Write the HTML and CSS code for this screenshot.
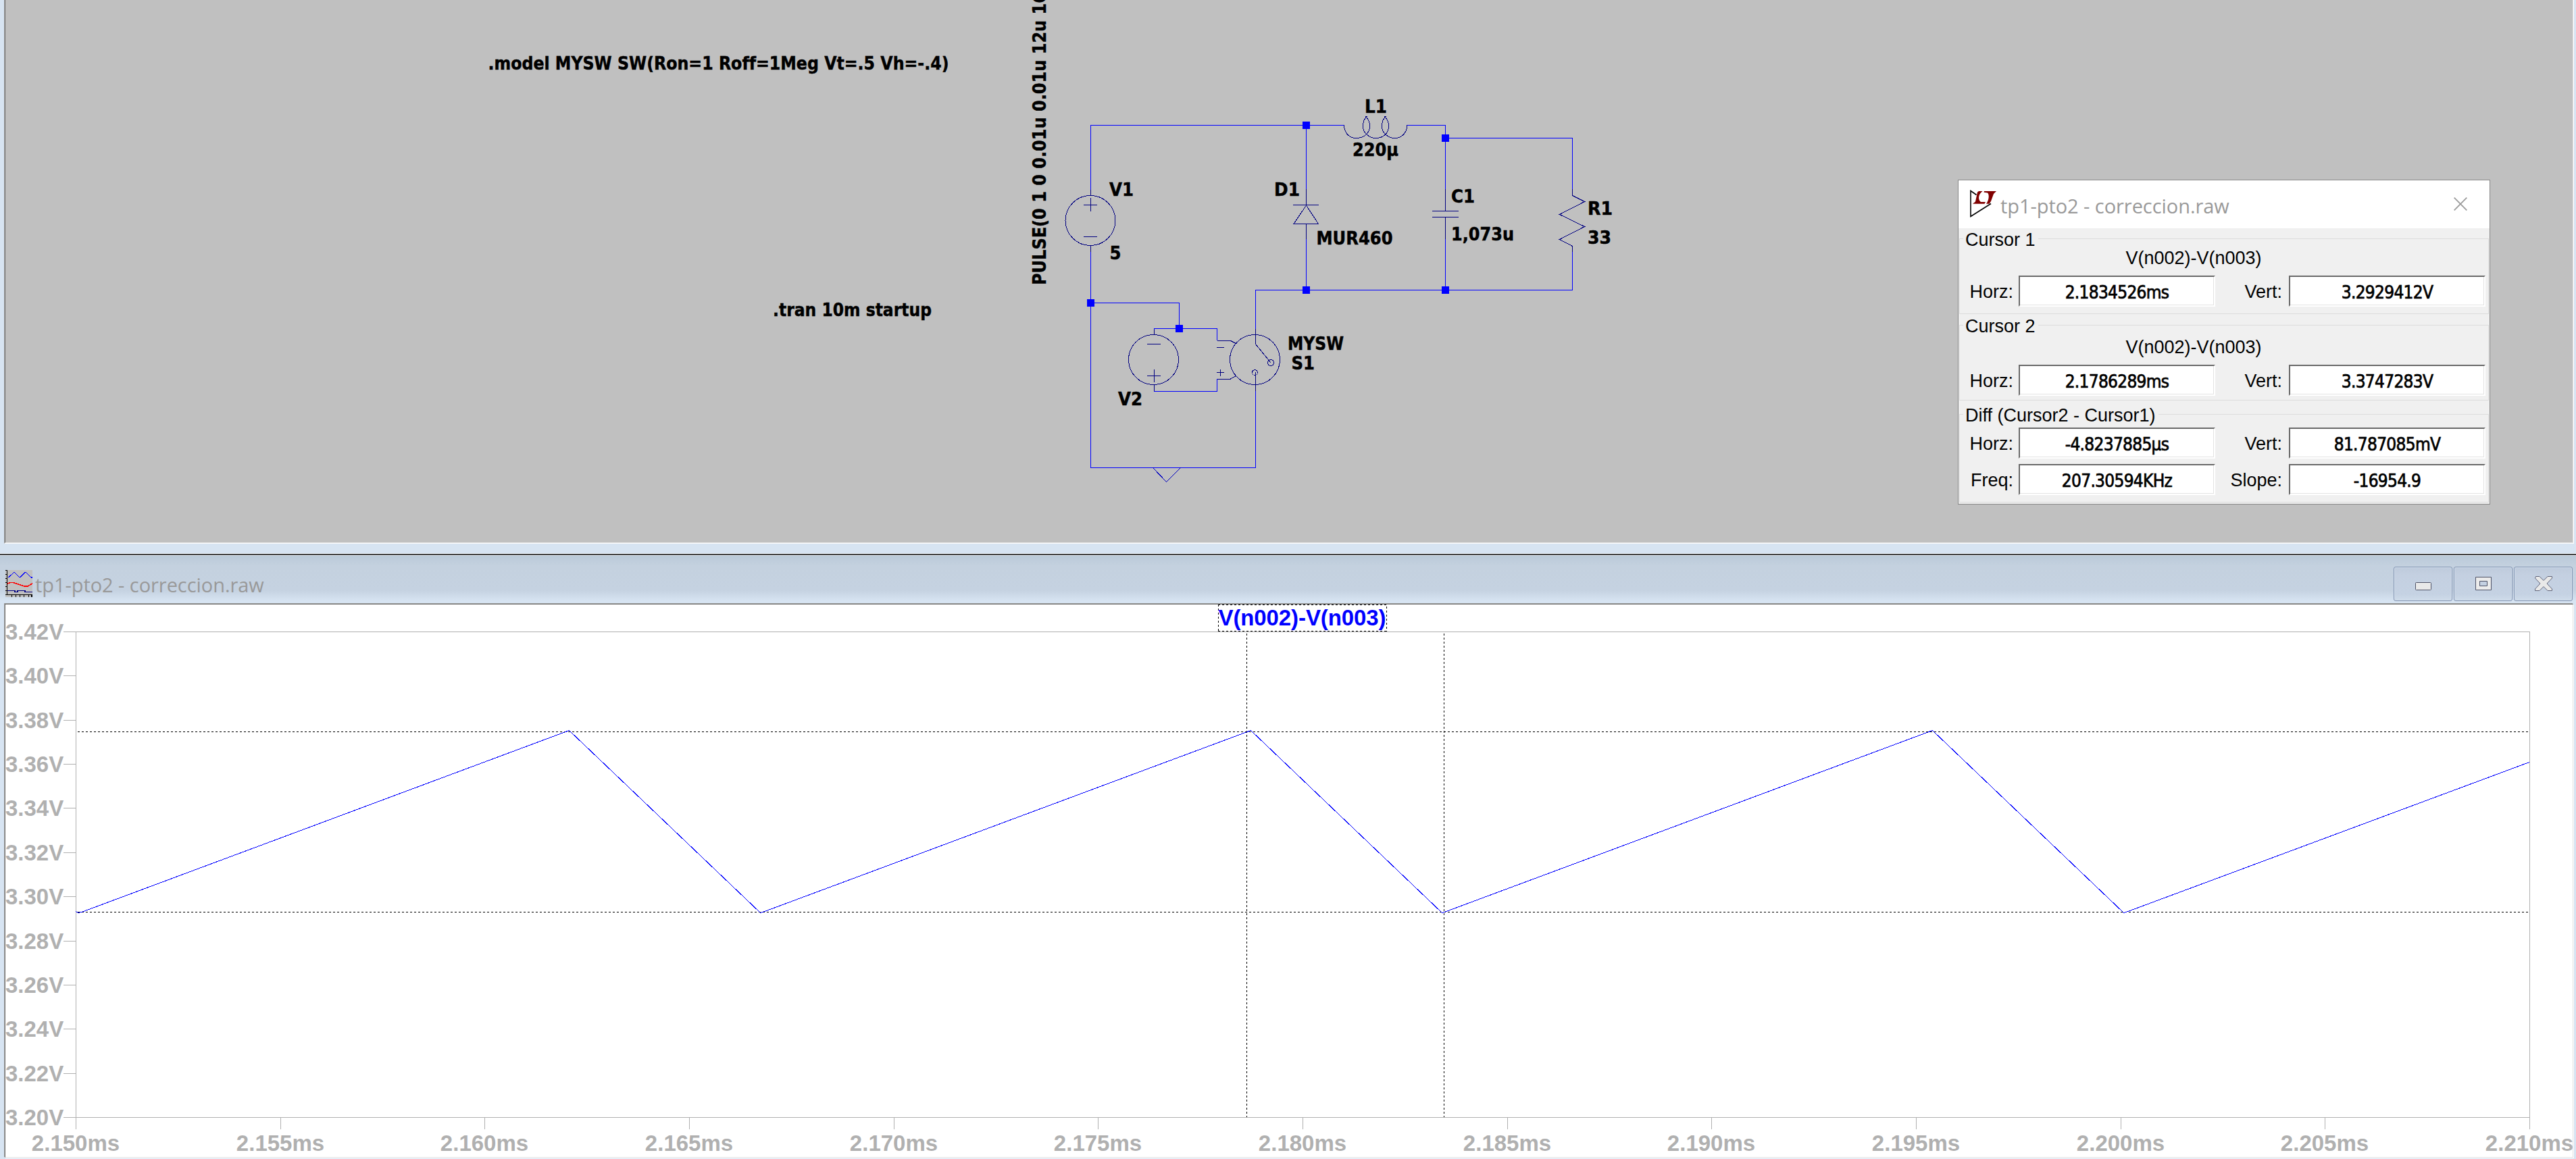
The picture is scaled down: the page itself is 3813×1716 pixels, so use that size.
FILE: index.html
```html
<!DOCTYPE html>
<html lang="es">
<head>
<meta charset="utf-8">
<title>tp1-pto2 - correccion.raw</title>
<link rel="stylesheet" href="styles.css">
</head>
<body>
<div class="workspace">
  <section class="schematic-window">
    <svg class="schematic" width="3800" height="803" viewBox="8 0 3800 803">
      <g class="wire">
        <path d="M1614.5 281V185.5H1989.5M2083 185.5H2139.5V280M1933.5 185.5V280M2139.5 204.5H2327.5V280M2327.5 373V429.5H1858.5V487M1933.5 354V429.5M2139.5 354V429.5M1614.5 373V692.5H1858.5V579M1614.5 448.5H1745.5V486.5M1708.5 495V486.5H1801.5V504M1708.5 570V579.5H1801.5V561"/>
        <path class="ground" d="M1706.5 692.5L1726.5 713.5L1747.5 692.5"/>
      </g>
      <g class="part">
        <circle cx="1614" cy="326.5" r="37"/>
        <path d="M1614.5 281V289M1614.5 363V373M1604 303.5H1624M1614.5 293V313M1604 350.5H1624"/>
        <path d="M1933.5 280V303.5M1914 303.5H1952M1933.5 304L1915 331.5H1951.5L1933.5 304M1933.5 331V354M1914 331.5H1952"/>
        <path d="M1989.5 185.5C1990 197 1997 204.5 2007.5 204.5C2016 204.5 2027.5 200 2027.5 186C2027.5 180 2024 175 2021.5 172M2023.5 172C2020 175 2017.5 180 2017.5 187C2017.5 196 2026 204.5 2036.5 204.5C2046 204.5 2055.5 199 2055.5 186C2055.5 180 2052 175 2049.5 172M2051.5 172C2048 175 2045.5 180 2045.5 187C2045.5 196 2054 204.5 2064.5 204.5C2075 204.5 2082 197 2083 185.5"/>
        <path d="M2139.5 280V312M2120 312.5H2159M2120 321.5H2159M2139.5 321V354"/>
        <path d="M2327.5 280V289.5L2345.5 298.5L2308.5 317.5L2345.5 335.5L2308.5 354.5L2327.5 364.5V373"/>
        <circle cx="1707.5" cy="532.5" r="37"/>
        <path d="M1708.5 488V495M1708.5 570V579M1698 509.5H1718M1698 556.5H1718M1708.5 547V566"/>
        <circle cx="1857.5" cy="532.5" r="37"/>
        <path d="M1801.5 504.5H1821.5L1830.5 509M1801.5 561.5H1820.5L1829.5 556.5M1801 514.5H1812M1801 551.5H1812M1806.5 547V557"/>
        <path d="M1858.5 487V509.5L1881 537M1858.5 551V579"/>
        <circle cx="1881" cy="537" r="4.5"/>
        <circle cx="1857.5" cy="551.5" r="4"/>
      </g>
      <g class="node">
        <rect x="1928" y="180" width="11" height="11"/>
        <rect x="2134" y="199" width="11" height="11"/>
        <rect x="1928" y="424" width="11" height="11"/>
        <rect x="2134" y="424" width="11" height="11"/>
        <rect x="1609" y="443" width="11" height="11"/>
        <rect x="1740" y="481" width="11" height="11"/>
      </g>
      <g class="label">
        <text x="722.5" y="103" textLength="682" lengthAdjust="spacingAndGlyphs">.model MYSW SW(Ron=1 Roff=1Meg Vt=.5 Vh=-.4)</text>
        <text x="1144" y="468" textLength="235" lengthAdjust="spacingAndGlyphs">.tran 10m startup</text>
        <text transform="translate(1548 422) rotate(-90)" textLength="434" lengthAdjust="spacingAndGlyphs">PULSE(0 1 0 0.01u 0.01u 12u 16</text>
        <text x="1642" y="290" textLength="36" lengthAdjust="spacingAndGlyphs">V1</text>
        <text x="1642.5" y="384" textLength="17" lengthAdjust="spacingAndGlyphs">5</text>
        <text x="1886" y="290" textLength="38" lengthAdjust="spacingAndGlyphs">D1</text>
        <text x="1948.5" y="362" textLength="113" lengthAdjust="spacingAndGlyphs">MUR460</text>
        <text x="2020" y="167" textLength="33" lengthAdjust="spacingAndGlyphs">L1</text>
        <text x="2002" y="231" textLength="68" lengthAdjust="spacingAndGlyphs">220µ</text>
        <text x="2148" y="300" textLength="35" lengthAdjust="spacingAndGlyphs">C1</text>
        <text x="2148" y="356" textLength="93" lengthAdjust="spacingAndGlyphs">1,073u</text>
        <text x="2350" y="318" textLength="37" lengthAdjust="spacingAndGlyphs">R1</text>
        <text x="2350" y="361" textLength="35" lengthAdjust="spacingAndGlyphs">33</text>
        <text x="1655" y="600" textLength="36" lengthAdjust="spacingAndGlyphs">V2</text>
        <text x="1906" y="518" textLength="83" lengthAdjust="spacingAndGlyphs">MYSW</text>
        <text x="1911.5" y="547" textLength="34.5" lengthAdjust="spacingAndGlyphs">S1</text>
      </g>
    </svg>
  </section>

  <section class="wave-window">
    <header class="wave-title">
      <svg class="wave-icon" width="40" height="40" viewBox="0 0 40 40" shape-rendering="crispEdges">
        <rect width="40" height="40" fill="#c0c0c0"/>
        <path d="M2.5 0V36M0 .5H2M0 6.5H2M0 12.5H2M0 18.5H2M0 24.5H2M0 30.5H2M0 36.5H40M9.5 36V40M15.5 36V40M21.5 36V40M27.5 36V40M34.5 36V40M39 36V40" stroke="#000" stroke-width="1.5" fill="none"/>
        <path d="M4 11L9 7L13 3L21 11L30 3L38 11H40" stroke="#00f" stroke-width="1.3" fill="none"/>
        <path d="M3 20L7 18.5H12L20 21.5L28 24H33L40 20" stroke="#f00" stroke-width="1.6" fill="none"/>
        <path d="M3 30.5H14V32.5H18V30.5H29V32.5H40" stroke="#000080" stroke-width="1.3" fill="none"/>
      </svg>
      <span class="caption">tp1-pto2 - correccion.raw</span>
      <div class="buttons">
        <span class="button"><svg width="24" height="24"><rect x=".5" y="10.5" width="23" height="11" rx="1" fill="#e9e9e9" stroke="#4f5266"/></svg></span>
        <span class="button"><svg width="24" height="24"><path d="M.5 2.5h23v19H.5zM6.500 8.500v7h11v-7z" fill="#ececec" fill-rule="evenodd" stroke="#4f5266"/></svg></span>
        <span class="button"><svg width="26" height="24"><path d="M1.500 1.500H7L13 7.500L19 1.500H25.500V4L18 12L25.500 20V22.500H19L13 16.500L7 22.500H.5V20L8 12L.5 4z" fill="#e9e9e9" stroke="#60647a"/></svg></span>
      </div>
    </header>
    <svg class="plot" width="3800" height="818" viewBox="8 895 3800 818">
      <path class="axis" d="M94 935.500H3744.500V1672M112.500 935V1672M94 1654.500H3744M94 1000.500h18M94 1066.500h18M94 1131.500h18M94 1196.500h18M94 1262.500h18M94 1327.500h18M94 1393.500h18M94 1458.500h18M94 1523.500h18M94 1589.500h18M415.500 1654v18M717.500 1654v18M1020.500 1654v18M1323.500 1654v18M1625.500 1654v18M1928.500 1654v18M2231.500 1654v18M2533.500 1654v18M2836.500 1654v18M3139.500 1654v18M3441.500 1654v18"/>
      <path class="cursor" d="M115 1083.500H3743M115 1350.500H3743M1845.500 938V1654M2137.500 938V1654"/>
      <path class="cursor" d="M1803.500 895V934.500M1803 895.500H2052.500V934.500M1803 934.500H2052"/>
      <path class="trace" d="M112 1349.500L116 1351.500L122 1350L842.500 1081.500L1125.500 1351.500L1129 1350.500L1851.500 1081.500L2134.500 1351.500L2138 1350.500L2860.500 1081.500L3143.500 1351.500L3147 1350.500L3744 1128.500"/>
      <text class="trace-name" x="1803.500" y="926" textLength="248">V(n002)-V(n003)</text>
      <g class="tick">
        <text x="8" y="947">3.42V</text><text x="8" y="1012">3.40V</text>
        <text x="8" y="1078">3.38V</text><text x="8" y="1143">3.36V</text>
        <text x="8" y="1208">3.34V</text><text x="8" y="1274">3.32V</text>
        <text x="8" y="1339">3.30V</text><text x="8" y="1405">3.28V</text>
        <text x="8" y="1470">3.26V</text><text x="8" y="1535">3.24V</text>
        <text x="8" y="1601">3.22V</text><text x="8" y="1666">3.20V</text>
      </g>
      <g class="tick time">
        <text x="112" y="1704">2.150ms</text><text x="415" y="1704">2.155ms</text>
        <text x="717" y="1704">2.160ms</text><text x="1020" y="1704">2.165ms</text>
        <text x="1323" y="1704">2.170ms</text><text x="1625" y="1704">2.175ms</text>
        <text x="1928" y="1704">2.180ms</text><text x="2231" y="1704">2.185ms</text>
        <text x="2533" y="1704">2.190ms</text><text x="2836" y="1704">2.195ms</text>
        <text x="3139" y="1704">2.200ms</text><text x="3441" y="1704">2.205ms</text>
        <text x="3744" y="1704">2.210ms</text>
      </g>
    </svg>
  </section>
</div>

<aside class="dialog">
  <header class="dialog-title">
    <svg class="lt-icon" width="40" height="42" viewBox="0 0 40 42">
      <path d="M9.500 7.500L1 1.500V39.500L31 20.500" fill="none" stroke="#000" stroke-width="1.600"/>
      <path d="M11 3.500L13 2H18.500L15.500 5C12.500 9 12 15 16 18H23L21.500 20.800H4L8 17.500ZM21 2H39L35 6L31 17L28.500 20.800H24C28 16 29 7 26 4.500L20.500 3.800Z" fill="#800000"/>
    </svg>
    <span class="caption">tp1-pto2 - correccion.raw</span>
    <svg class="close" width="20" height="20"><path d="M.7.7L19.300 19.300M19.300.7L.7 19.300" stroke="#999" stroke-width="1.700"/></svg>
  </header>
  <div class="group first">
    <span class="legend">Cursor 1</span>
    <div class="signal">V(n002)-V(n003)</div>
    <div class="row"><label>Horz:</label><output>2.1834526ms</output><label>Vert:</label><output>3.2929412V</output></div>
  </div>
  <div class="group second">
    <span class="legend">Cursor 2</span>
    <div class="signal">V(n002)-V(n003)</div>
    <div class="row"><label>Horz:</label><output>2.1786289ms</output><label>Vert:</label><output>3.3747283V</output></div>
  </div>
  <div class="group diff">
    <span class="legend">Diff (Cursor2 - Cursor1)</span>
    <div class="row"><label>Horz:</label><output>-4.8237885µs</output><label>Vert:</label><output>81.787085mV</output></div>
    <div class="row"><label>Freq:</label><output>207.30594KHz</output><label>Slope:</label><output>-16954.9</output></div>
  </div>
</aside>
</body>
</html>
```
FILE: styles.css
```css
* { box-sizing: border-box; }
body {
  margin: 0;
  width: 3813px;
  height: 1716px;
  overflow: hidden;
  background: #d7e4f2;
  font-family: "Liberation Sans", Arial, sans-serif;
}
svg { display: block; flex: none; }

.workspace { display: flex; flex-direction: column; }

/* schematic */
.schematic-window {
  margin: 0 3px 14px 6px;
  height: 805px;
  border: solid;
  border-width: 0 1px 1px;
  border-color: #fff #fff #fff #a0a0a0;
}
.schematic {
  width: 3802px;
  height: 804px;
  border: solid;
  border-width: 0 1px 1px;
  border-color: #e3e3e3 #e3e3e3 #e3e3e3 #696969;
  background: #c0c0c0;
}
.wire, .part { fill: none; stroke-width: 1; shape-rendering: crispEdges; }
.wire { stroke: #00f; }
.ground { stroke: #0000c0; }
.part { stroke: #000080; }
.node { fill: #00f; }
.label {
  font: bold 26px "DejaVu Sans", sans-serif;
  fill: #000;
  stroke: #000;
  stroke-width: 0.5px;
}

/* waveform viewer */
.wave-window { border-top: 1px solid #eef3f9; }
.wave-title {
  display: flex;
  align-items: flex-start;
  height: 74px;
  padding: 0 5px 0 8px;
  border-top: 2px solid #434343;
  box-shadow: inset 0 1px #e4ebf3;
  background: linear-gradient(#bacad9 0, #c4d1df 16px, #c5d2e1 52px, #d7e4f2 68px);
}
.wave-icon { margin-top: 22px; }
.caption {
  font: 29px/40px "Open Sans", "Noto Sans", sans-serif;
  letter-spacing: -0.06px;
  color: #999;
  white-space: nowrap;
}
.wave-title .caption { margin: 24px 0 0 4px; }
.buttons { display: flex; gap: 2px; margin: 17px 0 0 auto; }
.button {
  display: flex;
  justify-content: center;
  width: 87px;
  height: 51px;
  padding-top: 12px;
  border: 1px solid #8294b2;
  border-radius: 3px;
  background: linear-gradient(#becbdc, #c4d0e1 12px, #c5d2e3 40px, #cfdcea);
  box-shadow: inset 0 0 0 1px #d3deeb;
}
.plot {
  width: 3802px;
  height: 820px;
  margin-left: 7px;
  border: 1px solid #e3e3e3;
  border-top-color: #696969;
  border-left-color: #696969;
  box-shadow: -1px -1px #a0a0a0, 1px 1px #fff;
  background: #fff;
}
.plot path { fill: none; stroke-width: 1; shape-rendering: crispEdges; }
.axis { stroke: #b0b0b0; }
.cursor { stroke: #000; stroke-dasharray: 3 3; }
.trace { stroke: #00f; }
.tick, .trace-name { font-size: 33px; font-weight: bold; fill: #b0b0b0; }
.trace-name { fill: #00f; }
.time { text-anchor: middle; }

/* cursor readout, floating over the schematic */
.dialog {
  position: absolute;
  left: 2898px;
  top: 266px;
  width: 788px;
  height: 481px;
  border: 1px solid #888;
  background: #f0f0f0;
  font-size: 27px;
}
.dialog-title {
  display: flex;
  align-items: flex-start;
  height: 71px;
  padding: 14px 33px 0 17px;
  background: #fff;
}
.dialog-title .caption { margin: 4px 0 0 5px; }
.close { margin: 11px 0 0 auto; }
.group {
  position: relative;
  margin: 0 1px;
  border: 1px solid #dcdcdc;
}
.first { height: 112px; margin-top: 15px; }
.second { height: 112px; margin-top: 16px; padding-top: 4px; }
.diff {
  display: flex;
  flex-direction: column;
  gap: 8px;
  height: 131px;
  margin-top: 20px;
  padding-top: 19px;
}
.legend {
  position: absolute;
  left: 5px;
  top: -14px;
  padding: 0 4px 0 3px;
  line-height: 30px;
  background: #f0f0f0;
}
.signal { width: 692px; height: 54px; line-height: 56px; text-align: center; }
.row {
  display: grid;
  grid-template-columns: 87px 291px 109px 291px;
  height: 46px;
}
.row label { padding-right: 8px; line-height: 49px; text-align: right; }
.row label:nth-of-type(2) { padding-right: 10px; }
.row output {
  height: 46px;
  border: 2px solid #fff;
  border-top-color: #696969;
  border-left-color: #696969;
  background: #fff;
  box-shadow: inset -1px -1px #e3e3e3;
  font: 26px/46px "DejaVu Sans Condensed", "DejaVu Sans", sans-serif;
  letter-spacing: -0.7px;
  text-align: center;
  -webkit-text-stroke: 0.7px #000;
}
```
